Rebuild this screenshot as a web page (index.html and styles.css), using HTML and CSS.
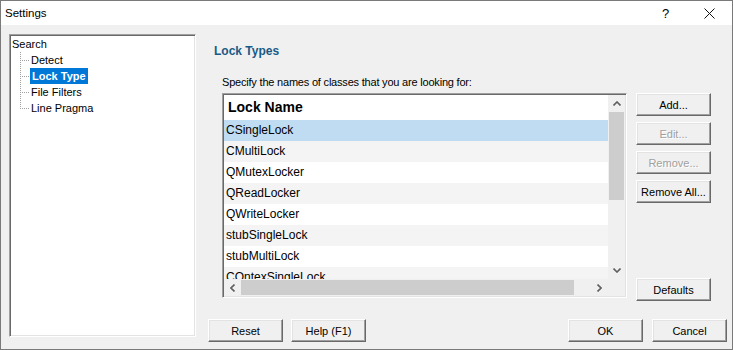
FILE: index.html
```html
<!DOCTYPE html>
<html>
<head>
<meta charset="utf-8">
<title>Settings</title>
<link rel="stylesheet" href="styles.css">
</head>
<body>
<div class="window">
  <div class="titlebar">
    <span class="title">Settings</span>
    <span class="tb-help">?</span>
    <svg class="tb-close" width="11" height="11" viewBox="0 0 11 11"><path d="M0.5 0.5 L10.5 10.5 M10.5 0.5 L0.5 10.5" stroke="#111" stroke-width="1" fill="none"/></svg>
  </div>
  <div class="content">
    <div class="tree">
      <div class="node root">Search</div>
      <div class="node child"><span class="twig"></span><span class="label">Detect</span></div>
      <div class="node child"><span class="twig"></span><span class="label selected">Lock Type</span></div>
      <div class="node child"><span class="twig"></span><span class="label">File Filters</span></div>
      <div class="node child last"><span class="twig"></span><span class="label">Line Pragma</span></div>
    </div>
    <div class="page">
      <div class="heading">Lock Types</div>
      <div class="mid">
        <div class="specify">Specify the names of classes that you are looking for:</div>
        <div class="listbox">
          <div class="listview">
            <div class="lv-header">Lock Name</div>
            <div class="lv-row sel">CSingleLock</div>
            <div class="lv-row alt">CMultiLock</div>
            <div class="lv-row">QMutexLocker</div>
            <div class="lv-row alt">QReadLocker</div>
            <div class="lv-row">QWriteLocker</div>
            <div class="lv-row alt">stubSingleLock</div>
            <div class="lv-row">stubMultiLock</div>
            <div class="lv-row alt">COntexSingleLock</div>
          </div>
          <div class="vscroll">
            <div class="sb-arrow"><svg width="8" height="5" viewBox="0 0 8 5"><path d="M0.5 4.5 L4 1 L7.5 4.5" stroke="#606060" stroke-width="1.6" fill="none"/></svg></div>
            <div class="vtrack"><div class="vthumb"></div></div>
            <div class="sb-arrow"><svg width="8" height="5" viewBox="0 0 8 5"><path d="M0.5 0.5 L4 4 L7.5 0.5" stroke="#606060" stroke-width="1.6" fill="none"/></svg></div>
          </div>
          <div class="hscroll">
            <div class="sb-arrow"><svg width="5" height="8" viewBox="0 0 5 8"><path d="M4.5 0.5 L1 4 L4.5 7.5" stroke="#606060" stroke-width="1.6" fill="none"/></svg></div>
            <div class="htrack"><div class="hthumb"></div></div>
            <div class="sb-arrow"><svg width="5" height="8" viewBox="0 0 5 8"><path d="M0.5 0.5 L4 4 L0.5 7.5" stroke="#606060" stroke-width="1.6" fill="none"/></svg></div>
          </div>
          <div class="corner"></div>
        </div>
        <div class="side">
          <button class="btn">Add...</button>
          <button class="btn" disabled>Edit...</button>
          <button class="btn" disabled>Remove...</button>
          <button class="btn">Remove All...</button>
          <button class="btn defaults">Defaults</button>
        </div>
      </div>
      <div class="bottom">
        <button class="btn">Reset</button>
        <button class="btn">Help (F1)</button>
        <span class="spacer"></span>
        <button class="btn">OK</button>
        <button class="btn">Cancel</button>
      </div>
    </div>
  </div>
</div>
</body>
</html>
```
FILE: styles.css
```css
* { box-sizing: border-box; }
html, body { margin: 0; padding: 0; }
body { width: 733px; height: 350px; overflow: hidden; background: #f0f0f0; font-family: "Liberation Sans", Arial, sans-serif; color: #000; }

.window { width: 733px; height: 350px; border: 1px solid #7a7a7a; background: #f0f0f0; display: flex; flex-direction: column; }

.titlebar { height: 24px; background: #fff; display: flex; align-items: center; flex: none; }
.title { font-size: 11.5px; margin-left: 4px; flex: 1; }
.tb-help { font-size: 13px; width: 10px; margin-right: 32px; }
.tb-close { margin-right: 17px; }

.content { display: flex; padding: 9px 0 0 8px; flex: 1; }

.tree { width: 187px; height: 303px; background: #fff; border: 1px solid; border-color: #a0a0a0 #ffffff #ffffff #a0a0a0; box-shadow: inset 1px 1px #696969, inset -1px -1px #e3e3e3; padding: 1px 0 0 1px; font-size: 11px; }
.node { height: 16px; line-height: 16px; display: flex; white-space: nowrap; }
.root { padding-left: 1px; }
.twig { width: 19px; height: 16px; flex: none;
  background-image: repeating-linear-gradient(to bottom, #a0a0a0 0 1px, transparent 1px 2px), repeating-linear-gradient(to right, #a0a0a0 0 1px, transparent 1px 2px);
  background-size: 1px 16px, 8px 1px; background-position: 9px 0, 11px 8px; background-repeat: no-repeat; }
.last .twig { background-size: 1px 9px, 8px 1px; }
.label { padding: 0 1px 0 1px; }
.label.selected { background: #0078d7; color: #fff; font-weight: bold; padding: 0 2px 0 2px; }

.page { margin-left: 12px; padding-top: 10px; display: flex; flex-direction: column; width: 519px; }
.heading { font-size: 12px; font-weight: bold; color: #1a5a86; line-height: 15px; margin-left: 6px; }
.mid { display: grid; grid-template-columns: 405px 75px; grid-template-rows: 17px 208px; column-gap: 9px; margin-left: 14px; margin-top: 17px; }
.specify { font-size: 11px; letter-spacing: -0.2px; line-height: 13px; grid-column: 1; grid-row: 1; white-space: nowrap; }

.listbox { grid-column: 1; grid-row: 2; height: 205px; border: 1px solid; border-color: #a0a0a0 #ffffff #ffffff #a0a0a0; box-shadow: inset 1px 1px #696969, inset -1px -1px #e3e3e3; padding: 1px; display: grid; grid-template-columns: 384px 17px; grid-template-rows: 184px 17px; background: #fff; }
.listview { overflow: hidden; background: #fff; }
.lv-header { height: 25px; line-height: 25px; font-size: 14px; font-weight: bold; padding-left: 4px; }
.lv-row { height: 21px; line-height: 21px; font-size: 12px; padding-left: 2px; }
.lv-row.alt { background: #f4f4f4; }
.lv-row.sel { background: #c0dcf3; }

.vscroll { background: #f0f0f0; display: flex; flex-direction: column; }
.sb-arrow { width: 17px; height: 17px; display: flex; align-items: center; justify-content: center; flex: none; }
.vtrack { flex: 1; padding: 0 1px; }
.vthumb { height: 88px; background: #cdcdcd; }
.hscroll { background: #f0f0f0; display: flex; }
.htrack { flex: 1; padding: 1px 0; }
.hthumb { width: 333px; height: 15px; background: #cdcdcd; margin-left: 0; }
.corner { background: #f0f0f0; }

.side { grid-column: 2; grid-row: 2; display: flex; flex-direction: column; gap: 6px; }
.defaults { margin-top: auto; }

.btn { width: 75px; height: 23px; padding: 0; font-family: "Liberation Sans", Arial, sans-serif; font-size: 11px; color: #000; background: #f0f0f0; border: 1px solid; border-color: #ffffff #696969 #696969 #ffffff; box-shadow: inset -1px -1px #a0a0a0, inset 1px 1px #e3e3e3; flex: none; }
.btn:disabled { color: #a0a0a0; text-shadow: 1px 1px #fff; }

.bottom { display: flex; margin-top: 18px; gap: 8px; }
.spacer { flex: 1; }
.bottom .btn:last-child { margin-left: 1px; }
```
